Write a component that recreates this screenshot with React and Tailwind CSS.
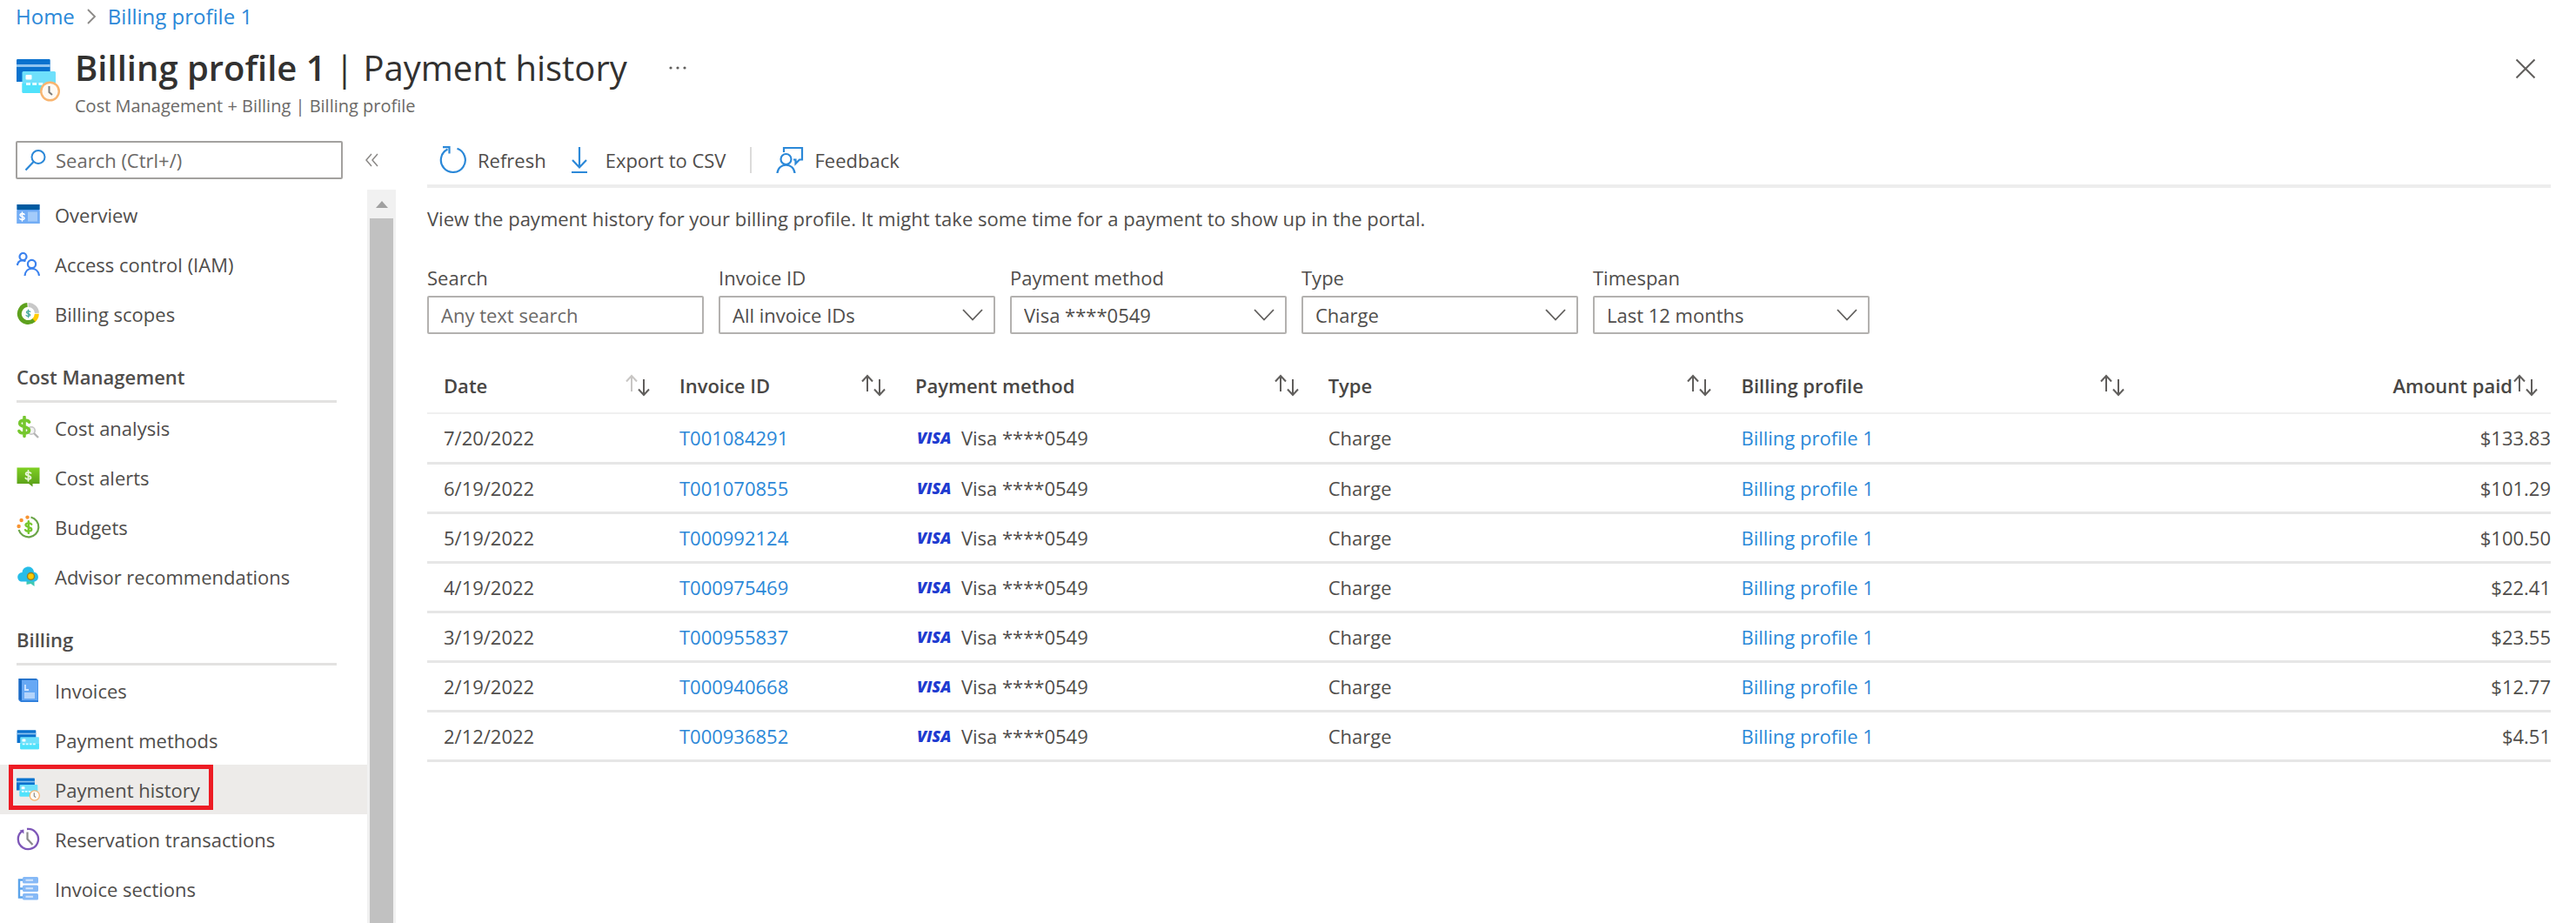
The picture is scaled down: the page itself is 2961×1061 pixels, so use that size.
import React from "react";

function Dollar({ x, y, s, color, width = 1.4 }) {
  return (
    <g transform={`translate(${x} ${y}) scale(${s})`} stroke={color} strokeWidth={width} fill="none" strokeLinecap="round">
      <path d="M2.3 -2.2C1.8 -3.3 -2.2 -3.6 -2.2 -1.6C-2.2 0.3 2.3 -0.3 2.3 1.7C2.3 3.6 -2 3.4 -2.5 2.1M0 -4.6V4.6" />
    </g>
  );
}

function NavIcon({ children }) {
  return (
    <svg viewBox="0 0 27 27" className="h-[27px] w-[27px] shrink-0" aria-hidden="true">
      {children}
    </svg>
  );
}

function OverviewIcon() {
  return (
    <NavIcon>
      <rect x="0.5" y="2" width="26" height="22" fill="#5ea0ef" />
      <rect x="0.5" y="9" width="26" height="15" fill="#73adf5" />
      <rect x="0.5" y="2" width="26" height="6" fill="#005ba1" />
      <rect x="13" y="10.5" width="11" height="11" fill="#a3cbfa" />
      <Dollar x={6.5} y={16} s={1.1} color="#ffffff" />
    </NavIcon>
  );
}

function AccessIcon() {
  return (
    <NavIcon>
      <g fill="none" stroke="#3b82ee" strokeWidth="2.2">
        <circle cx="7.5" cy="5" r="4" />
        <path d="M0.8 15C1.8 9.5 6 8.2 10.5 10.2" />
        <circle cx="17.5" cy="13.5" r="4.6" />
        <path d="M9.5 27C10.5 16 24.5 16 26 27" />
      </g>
    </NavIcon>
  );
}

function ScopesIcon() {
  return (
    <NavIcon>
      <g fill="none" strokeWidth="5">
        <path d="M13.5 3.5A10 10 0 0 1 23.5 12.8" stroke="#c8c8c8" />
        <path d="M23.3 13.8A10 10 0 0 1 19.5 21.5" stroke="#ffca00" />
        <path d="M20 21A10 10 0 1 1 12.5 3.6" stroke="#5ea11e" />
      </g>
      <Dollar x={13.5} y={13.5} s={0.95} color="#45a9a0" />
    </NavIcon>
  );
}

function AnalysisIcon() {
  return (
    <NavIcon>
      <circle cx="17" cy="17" r="4.2" fill="#f3f3f3" stroke="#c4c4c4" strokeWidth="1.6" />
      <path d="M20 20L25 25" stroke="#b4b4b4" strokeWidth="2.4" />
      <Dollar x={9} y={12.5} s={2.4} color="#76c72e" width={1.5} />
    </NavIcon>
  );
}

function AlertsIcon() {
  return (
    <NavIcon>
      <defs>
        <linearGradient id="alerts" x1="0" y1="0" x2="0" y2="1">
          <stop offset="0" stopColor="#7fd023" />
          <stop offset="1" stopColor="#569a18" />
        </linearGradient>
      </defs>
      <path d="M0.5 2.5H26.5V21H18.5V24.5L14 21H0.5Z" fill="url(#alerts)" />
      <Dollar x={13.5} y={11.8} s={1.3} color="#e9f6d9" width={1.4} />
    </NavIcon>
  );
}

function BudgetsIcon() {
  return (
    <NavIcon>
      <path d="M16.5 2.5A11.6 11.6 0 1 1 2.6 17" fill="none" stroke="#6aa548" strokeWidth="2.2" />
      <circle cx="2.6" cy="13" r="2.2" fill="#f79433" />
      <circle cx="5.6" cy="6" r="2.2" fill="#f79433" />
      <circle cx="12.5" cy="2.6" r="2.2" fill="#f79433" />
      <Dollar x={13.8} y={14} s={1.5} color="#76c72e" width={1.6} />
    </NavIcon>
  );
}

function AdvisorIcon() {
  return (
    <NavIcon>
      <path d="M11.5 17H20.5V25L16.5 22L11.5 23Z" fill="#3fc8b4" />
      <path d="M6.5 19.5C-0.5 19.5 -0.5 9.5 6.5 9C7.5 0.5 19 0.5 20 8.5C26.8 9.5 26.5 19.5 19.5 19.5Z" fill="#27bde8" />
      <circle cx="16.5" cy="13.5" r="4" fill="#ffca00" stroke="#927f2c" strokeWidth="1.4" />
    </NavIcon>
  );
}

function InvoicesIcon() {
  return (
    <NavIcon>
      <path d="M2.5 0H23L25 2V27H5L2.5 25Z" fill="#2f7fdc" />
      <path d="M6 1.5H24.5V25H6Z" fill="#67a8f4" />
      <path d="M2.5 0H22L24 1.5H6V25L2.5 24Z" fill="#1b6ac4" />
      <path d="M10 7V13H14" fill="none" stroke="#cfe4ff" strokeWidth="1.8" />
      <rect x="9" y="16" width="12" height="7" fill="#b4d4fb" />
    </NavIcon>
  );
}

function CardsShape() {
  return (
    <>
      <path d="M1.2 0H37.5A1.2 1.2 0 0 1 38.7 1.2V26H0V1.2A1.2 1.2 0 0 1 1.2 0Z" fill="#0a72ce" />
      <rect x="0" y="6" width="38.7" height="3" fill="#8fc4f0" />
      <rect x="6.5" y="14" width="38.5" height="25" rx="1.5" fill="#6fe0fb" />
      <path d="M6.5 28H45V37.5A1.5 1.5 0 0 1 43.5 39H8A1.5 1.5 0 0 1 6.5 37.5Z" fill="#50e2fb" />
      <rect x="10.5" y="18" width="7" height="5.5" rx="1" fill="#ffffff" />
      <path d="M11 28.5H38" stroke="#e4fbff" strokeWidth="3" strokeDasharray="5 2.2" />
    </>
  );
}

function ClockBadge() {
  return (
    <>
      <circle cx="38.5" cy="37" r="10.3" fill="#fffaf4" stroke="#f8b46f" strokeWidth="2.4" />
      <path d="M37.5 31V38L41 41" fill="none" stroke="#7c7c7c" strokeWidth="2" />
    </>
  );
}

function PaymentMethodsIcon() {
  return (
    <svg viewBox="-1 -4 48 48" className="h-[27px] w-[27px] shrink-0" aria-hidden="true">
      <CardsShape />
    </svg>
  );
}

function PaymentHistoryIcon({ className }) {
  return (
    <svg viewBox="0 -1 50 50" className={className} aria-hidden="true">
      <CardsShape />
      <ClockBadge />
    </svg>
  );
}

function ReservationIcon() {
  return (
    <NavIcon>
      <path d="M12 2A11.6 11.6 0 1 1 6 4.6" fill="none" stroke="#7e57b8" strokeWidth="2.3" />
      <path d="M3.5 3.5L8.4 2.6V7.6Z" fill="#7e57b8" />
      <path d="M12.5 5.5V13.5L18.5 20" fill="none" stroke="#8a8a8a" strokeWidth="2.2" />
    </NavIcon>
  );
}

function SectionsIcon() {
  return (
    <NavIcon>
      <path d="M8 3.5H3V23.5H8M3 13.5H8" fill="none" stroke="#5aa3ea" strokeWidth="2.4" />
      <rect x="7" y="0" width="18" height="7.5" rx="1.5" fill="#86b9f6" />
      <rect x="7" y="9.5" width="18" height="7.5" rx="1.5" fill="#86b9f6" />
      <rect x="7" y="19" width="18" height="7.5" rx="1.5" fill="#86b9f6" />
      <path d="M10.5 3.7H19M10.5 13.2H19M10.5 22.7H19" stroke="#d3e5fc" strokeWidth="2" />
    </NavIcon>
  );
}

const navGroups = [
  {
    items: [
      ["Overview", OverviewIcon],
      ["Access control (IAM)", AccessIcon],
      ["Billing scopes", ScopesIcon],
    ],
  },
  {
    title: "Cost Management",
    items: [
      ["Cost analysis", AnalysisIcon],
      ["Cost alerts", AlertsIcon],
      ["Budgets", BudgetsIcon],
      ["Advisor recommendations", AdvisorIcon],
    ],
  },
  {
    title: "Billing",
    items: [
      ["Invoices", InvoicesIcon],
      ["Payment methods", PaymentMethodsIcon],
      ["Payment history", () => <PaymentHistoryIcon className="h-[27px] w-[27px] shrink-0" />],
      ["Reservation transactions", ReservationIcon],
      ["Invoice sections", SectionsIcon],
    ],
  },
];

const filters = [
  ["Invoice ID", "All invoice IDs"],
  ["Payment method", "Visa ****0549"],
  ["Type", "Charge"],
  ["Timespan", "Last 12 months"],
];

const payments = [
  ["7/20/2022", "T001084291", "$133.83"],
  ["6/19/2022", "T001070855", "$101.29"],
  ["5/19/2022", "T000992124", "$100.50"],
  ["4/19/2022", "T000975469", "$22.41"],
  ["3/19/2022", "T000955837", "$23.55"],
  ["2/19/2022", "T000940668", "$12.77"],
  ["2/12/2022", "T000936852", "$4.51"],
];

function NavItem({ label, Icon, active }) {
  return (
    <li>
      <a
        href="#"
        aria-current={active ? "page" : undefined}
        className={
          active
            ? "relative flex h-[57px] items-center gap-[17px] bg-[#edebe9] pl-[19px]"
            : "flex h-[57px] items-center gap-[17px] pl-[19px]"
        }
      >
        <Icon />
        <span>{label}</span>
        {active && <span className="absolute top-0 left-[10px] h-[52px] w-[235px] border-5 border-[#ed1c24]" />}
      </a>
    </li>
  );
}

function Sidebar() {
  return (
    <aside className="flex w-[455px] shrink-0 flex-col">
      <div className="flex items-center pt-[7px] pl-[18px]">
        <div className="flex h-11 w-[376px] items-center gap-[10px] rounded-xs border-2 border-[#a3a19f] px-2">
          <svg viewBox="0 0 26 26" className="h-[26px] w-[26px] shrink-0" aria-hidden="true">
            <circle cx="16" cy="9.5" r="7.5" fill="none" stroke="#2b88d8" strokeWidth="2" />
            <path d="M10.5 15L1.5 24.5" stroke="#2b88d8" strokeWidth="2.2" />
          </svg>
          <input
            aria-label="Search menu"
            placeholder="Search (Ctrl+/)"
            className="w-full min-w-0 outline-none placeholder:text-[#6b6967]"
          />
        </div>
        <button aria-label="Collapse menu" className="ml-[25px]">
          <svg viewBox="0 0 16 16" className="h-4 w-4" fill="none" stroke="#8a8886" strokeWidth="1.5">
            <path d="M8 1L2 8L8 15M15 1L9 8L15 15" />
          </svg>
        </button>
      </div>
      <div className="mt-3 flex flex-1">
        <nav className="flex-1">
          {navGroups.map((group, i) => (
            <section key={i}>
              {group.title && (
                <h2 className="mr-[35px] ml-[19px] flex h-[74px] items-center border-b-3 border-[#e3e2e1] pt-4 font-semibold">
                  {group.title}
                </h2>
              )}
              <ul>
                {group.items.map(([label, Icon]) => (
                  <NavItem key={label} label={label} Icon={Icon} active={label === "Payment history"} />
                ))}
              </ul>
            </section>
          ))}
        </nav>
        <div className="flex w-[33px] flex-col items-center bg-[#f1f1f1]">
          <div className="flex h-[33px] items-center">
            <svg viewBox="0 0 14 8" className="h-2 w-[14px]" aria-hidden="true">
              <path d="M7 0L14 8H0Z" fill="#a0a0a0" />
            </svg>
          </div>
          <div className="w-[27px] flex-1 bg-[#c1c1c1]" />
        </div>
      </div>
    </aside>
  );
}

function Toolbar() {
  return (
    <div className="flex h-[61px] items-center border-b-4 border-[#ededed] pl-[14px]">
      <button className="flex items-center gap-3">
        <svg viewBox="0 0 32 32" className="h-8 w-8" fill="none" stroke="#2b88d8" strokeWidth="2.2" aria-hidden="true">
          <path d="M20.5 2.8A14 14 0 1 1 9.5 3.5" />
          <path d="M4 1.2H11.5V8.5" />
        </svg>
        Refresh
      </button>
      <button className="ml-7 flex items-center gap-5">
        <svg viewBox="0 0 20 32" className="h-8 w-5" fill="none" stroke="#2b88d8" strokeWidth="2.2" aria-hidden="true">
          <path d="M10 1V24M2 16L10 24.5L18 16M1 30H19" />
        </svg>
        Export to CSV
      </button>
      <span className="mx-7 h-[30px] w-[2px] bg-[#dcdbda]" />
      <button className="flex items-center gap-3">
        <svg viewBox="0 0 32 32" className="h-8 w-8" fill="none" stroke="#2b88d8" strokeWidth="2.2" aria-hidden="true">
          <path d="M9 7V2H30V15.5H27L22.5 20V15.5H20" />
          <circle cx="11.5" cy="15" r="6" />
          <path d="M1.5 31C2.5 18.5 20.5 18.5 21.5 31" />
        </svg>
        Feedback
      </button>
    </div>
  );
}

function Filters() {
  return (
    <div className="flex flex-wrap gap-[17px]">
      <div className="flex w-[318px] flex-col">
        <label htmlFor="text-search" className="mb-[3px] leading-9">
          Search
        </label>
        <input
          id="text-search"
          placeholder="Any text search"
          className="h-11 rounded-xs border-2 border-[#b3b1af] px-[14px] outline-none placeholder:text-[#6b6967]"
        />
      </div>
      {filters.map(([label, value]) => {
        const id = label.toLowerCase().replace(" ", "-");
        return (
          <div key={id} className="flex w-[318px] flex-col">
            <label htmlFor={id} className="mb-[3px] leading-9">
              {label}
            </label>
            <div className="relative">
              <select id={id} className="h-11 w-full appearance-none rounded-xs border-2 border-[#b3b1af] bg-white px-[14px]">
                <option>{value}</option>
              </select>
              <svg
                viewBox="0 0 24 14"
                className="pointer-events-none absolute top-[15px] right-[14px] h-[14px] w-6"
                fill="none"
                stroke="#605e5c"
                strokeWidth="1.8"
                aria-hidden="true"
              >
                <path d="M1 1L12 12.5L23 1" />
              </svg>
            </div>
          </div>
        );
      })}
    </div>
  );
}

function SortButton({ label, sorted }) {
  return (
    <button aria-label={`Sort by ${label}`}>
      <svg viewBox="0 0 30 26" className="h-[26px] w-[30px]" fill="none" stroke="#605e5c" strokeWidth="2">
        <path d="M8 20V2M2 8.5L8 2L14 8.5" stroke={sorted ? "#c8c6c4" : "#605e5c"} />
        <path d="M22 6V24M16 17.5L22 24L28 17.5" />
      </svg>
    </button>
  );
}

function HeaderCell({ label, sorted, end }) {
  return (
    <th scope="col" className="p-0 font-semibold text-[#484644]">
      <div className={end ? "flex items-center justify-end pr-[14px]" : "flex items-center justify-between pr-[14px] pl-[19px]"}>
        <span>{label}</span>
        <SortButton label={label} sorted={sorted} />
      </div>
    </th>
  );
}

function PaymentsTable() {
  return (
    <table className="mt-7 w-full table-fixed border-collapse text-left">
      <colgroup>
        <col className="w-[11.1%]" />
        <col className="w-[11.1%]" />
        <col />
        <col />
        <col />
        <col />
      </colgroup>
      <thead>
        <tr className="h-[63px] border-b-2 border-[#f0f0f0]">
          <HeaderCell label="Date" sorted />
          <HeaderCell label="Invoice ID" />
          <HeaderCell label="Payment method" />
          <HeaderCell label="Type" />
          <HeaderCell label="Billing profile" />
          <HeaderCell label="Amount paid" end />
        </tr>
      </thead>
      <tbody>
        {payments.map(([date, invoice, amount]) => (
          <tr key={invoice} className="h-[57px] border-b-3 border-[#e6e6e6]">
            <td className="py-0 pl-[19px]">{date}</td>
            <td className="py-0 pl-[19px]">
              <a href="#" className="text-[#2b88d8]">
                {invoice}
              </a>
            </td>
            <td className="py-0 pl-[21px]">
              <span className="flex items-center gap-[11px]">
                <span className="w-10 text-lg leading-6 font-extrabold text-[#1f3bd0] italic">VISA</span>
                <span>Visa ****0549</span>
              </span>
            </td>
            <td className="py-0 pl-[19px]">Charge</td>
            <td className="py-0 pl-[19px]">
              <a href="#" className="text-[#2b88d8]">
                Billing profile 1
              </a>
            </td>
            <td className="p-0 text-right">{amount}</td>
          </tr>
        ))}
      </tbody>
    </table>
  );
}

export default function App() {
  return (
    <div className="flex min-h-screen flex-col bg-white font-['Open_Sans','Noto_Sans',sans-serif] text-[22px] leading-8 text-[#4f4d4b]">
      <nav aria-label="Breadcrumb" className="flex h-[38px] items-center gap-3 pl-[18px] text-2xl text-[#2b88d8]">
        <a href="#">Home</a>
        <svg viewBox="0 0 14 18" className="h-[18px] w-[14px]" fill="none" stroke="#8a8886" strokeWidth="1.8" aria-hidden="true">
          <path d="M3 1L11 9L3 17" />
        </svg>
        <a href="#">Billing profile 1</a>
      </nav>
      <header className="flex items-start pt-[11px] pr-[46px] pb-[18px] pl-[19px]">
        <PaymentHistoryIcon className="mt-[18px] h-[50px] w-[50px] shrink-0" />
        <div className="ml-[17px]">
          <div className="flex items-center">
            <h1 className="text-[40px] leading-[58px] text-[#323130]">
              <span className="font-semibold">Billing profile 1</span> | Payment history
            </h1>
            <button aria-label="More" className="ml-12">
              <svg viewBox="0 0 20 4" className="h-1 w-5" fill="#605e5c">
                <circle cx="2" cy="2" r="1.6" />
                <circle cx="10" cy="2" r="1.6" />
                <circle cx="18" cy="2" r="1.6" />
              </svg>
            </button>
          </div>
          <p className="text-xl leading-[30px] text-[#6b6967]">Cost Management + Billing | Billing profile</p>
        </div>
        <button aria-label="Close" className="mt-[18px] ml-auto">
          <svg viewBox="0 0 24 24" className="h-6 w-6" fill="none" stroke="#605e5c" strokeWidth="2">
            <path d="M1.5 1.5L22.5 22.5M22.5 1.5L1.5 22.5" />
          </svg>
        </button>
      </header>
      <div className="flex flex-1">
        <Sidebar />
        <main className="min-w-0 flex-1 pr-[29px] pl-9">
          <Toolbar />
          <p className="mt-[19px] mb-[34px]">
            View the payment history for your billing profile. It might take some time for a payment to show up in the portal.
          </p>
          <Filters />
          <PaymentsTable />
        </main>
      </div>
    </div>
  );
}
